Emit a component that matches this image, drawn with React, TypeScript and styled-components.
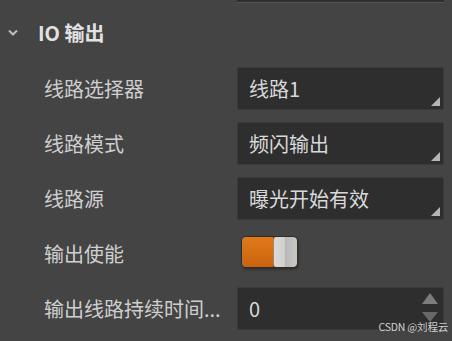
import styled, { createGlobalStyle } from 'styled-components';

const GlobalStyle = createGlobalStyle`
	html, body {
		margin: 0;
		padding: 0;
		background: #444444;
	}
	body {
		font-family: "Noto Sans CJK SC", "Noto Sans", sans-serif;
		overflow: hidden;
	}
`;

const Panel = styled.div`
	position: relative;
	width: 452px;
	height: 341px;
	background: #444444;
	overflow: hidden;
`;

const TopStub = styled.div`
	margin-left: 237px;
	width: 207px;
	height: 2px;
	background: #2f2f2f;
	border-bottom: 1px solid #545454;
`;

const Header = styled.div`
	display: flex;
	align-items: center;
	height: 58px;
	padding-left: 8px;
	gap: 20px;
	color: #e2e2e2;
	font-size: 20px;
	font-weight: 700;
`;

const Chevron = styled.svg`
	width: 10px;
	height: 7px;
	margin-top: 1px;
`;

const Row = styled.div`
	display: grid;
	grid-template-columns: 237px 207px;
	align-items: center;
	height: 55px;
`;

const Label = styled.div`
	padding-left: 44px;
	color: #cfcfcf;
	font-size: 20px;
	white-space: nowrap;
	overflow: hidden;
`;

const Field = styled.div`
	position: relative;
	display: flex;
	align-items: center;
	box-sizing: border-box;
	height: 43px;
	padding-left: 11px;
	background: #2e2e2e;
	border: 1px solid #3a3a3a;
	border-radius: 2px;
	color: #d9d9d9;
	font-size: 20px;
`;

const Grip = styled.div`
	position: absolute;
	right: 3px;
	bottom: 3px;
	width: 0;
	height: 0;
	border-left: 9px solid transparent;
	border-bottom: 9px solid #b5b5b5;
`;

const Arrow = styled.div<{ $up: boolean }>`
	position: absolute;
	right: 5px;
	width: 0;
	height: 0;
	border-left: 8px solid transparent;
	border-right: 8px solid transparent;
	${(p) =>
		p.$up
			? 'top: 5px; border-bottom: 11px solid #7c7c7c;'
			: 'top: 24px; border-top: 10px solid #686868;'}
`;

const Toggle = styled.div`
	display: flex;
	width: 55px;
	height: 30px;
	margin-left: 5px;
	margin-top: -4px;
	border-radius: 4px;
	box-shadow: 0 0 0 1px #3a2a1c, 1px 2px 3px rgba(0, 0, 0, 0.45);
	overflow: hidden;
`;

const ToggleTrack = styled.div`
	flex: 1;
	background: linear-gradient(180deg, #e07a1c 0%, #d46c12 60%, #c86310 100%);
`;

const ToggleKnob = styled.div`
	width: 23px;
	border-radius: 3px;
	background: linear-gradient(90deg, #dadada 0%, #d0d0d0 45%, #b8b8b8 50%, #c8c8c8 100%);
	border-left: 1px solid #8a8a8a;
`;

const Watermark = styled.div`
	position: absolute;
	right: 4px;
	bottom: 7px;
	color: rgba(240, 240, 240, 0.85);
	font-family: "Noto Sans CJK SC", "Noto Sans", sans-serif;
	font-size: 10.5px;
	letter-spacing: -0.2px;
`;

type SelectRow = { label: string; value: string };

const selects: SelectRow[] = [
	{ label: '线路选择器', value: '线路1' },
	{ label: '线路模式', value: '频闪输出' },
	{ label: '线路源', value: '曝光开始有效' },
];

const App = () => {
	return (
		<Panel>
			<GlobalStyle />
			<TopStub />
			<Header>
				<Chevron viewBox="0 0 10 7">
					<path d="M1 1.5 L5 5.5 L9 1.5" fill="none" stroke="#bdbdbd" strokeWidth="2" />
				</Chevron>
				<span>IO 输出</span>
			</Header>
			{selects.map((s) => (
				<Row key={s.label}>
					<Label>{s.label}</Label>
					<Field>
						{s.value}
						<Grip />
					</Field>
				</Row>
			))}
			<Row>
				<Label>输出使能</Label>
				<Toggle>
					<ToggleTrack />
					<ToggleKnob />
				</Toggle>
			</Row>
			<Row>
				<Label>输出线路持续时间...</Label>
				<Field>
					0
					<Arrow $up />
					<Arrow $up={false} />
				</Field>
			</Row>
			<Watermark>CSDN @刘程云</Watermark>
		</Panel>
	);
};

export default App;
